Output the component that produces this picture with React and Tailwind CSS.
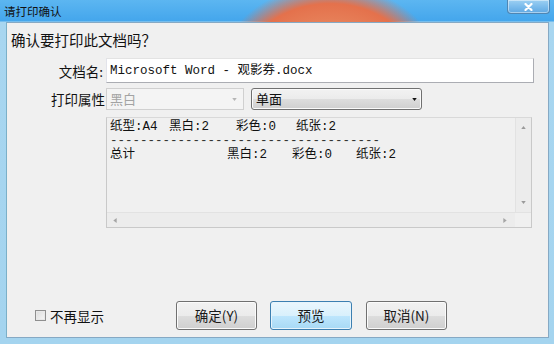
import React from "react"

const cjk = "font-['Noto_Sans_CJK_SC','Noto_Sans_CJK_JP',sans-serif]"
const mono = "font-['Liberation_Mono','Noto_Sans_CJK_SC',monospace]"

const Arrow = ({ dir, color = "#8a8a8a", size = 5 }) => {
  const pts = {
    up: "0,4 3,0 6,4",
    down: "0,0 6,0 3,4",
    left: "4,0 4,6 0,3",
    right: "0,0 0,6 4,3",
  }
  const horiz = dir == "left" || dir == "right"
  return (
    <svg
      width={horiz ? 4 : 6}
      height={horiz ? 6 : 4}
      viewBox={horiz ? "0 0 4 6" : "0 0 6 4"}
      style={{ width: horiz ? size - 1 : size, height: horiz ? size : size - 2 }}
    >
      <polygon points={pts[dir]} fill={color} />
    </svg>
  )
}

const Button = ({ label, primary }) => (
  <div
    className={
      "h-[29px] flex items-center justify-center rounded-[3px] border text-[13.5px] text-[#1a1a1a] " +
      (primary
        ? "w-[82px] border-[#3c7fb1] bg-[linear-gradient(180deg,#eaf6fd_0%,#d9f0fc_50%,#bee6fd_51%,#a7d9f5_100%)] shadow-[inset_0_0_0_1px_#e6f4fc]"
        : "w-[81px] border-[#707070] bg-[linear-gradient(180deg,#f2f2f2_0%,#ebebeb_50%,#dddddd_51%,#cfcfcf_100%)] shadow-[inset_0_0_0_1px_#fbfbfb]")
    }
  >
    {label}
  </div>
)

export default function App() {
  return (
    <div
      className={
        "w-[554px] h-[344px] relative flex flex-col overflow-hidden " +
        cjk +
        " bg-[radial-gradient(ellipse_110px_85px_at_330px_70px,#eba680_0%,#e88b62_40%,#e4714c_78%,rgba(228,113,76,0)_100%),linear-gradient(180deg,#5cb6f1_0px,#44a6ec_21px,#a8d6f0_22px,#a4d4ef_100%)]"
      }
    >
      {/* title bar */}
      <div className="h-[22px] flex items-center pl-[4px] shrink-0">
        <span className="text-[11.5px] leading-[14px] text-[#111] -mt-[1px]">
          请打印确认
        </span>
      </div>
      <div className="absolute top-0 right-[4px] w-[43px] h-[14px] rounded-b-[4px] border border-t-0 border-[#4f86b3] bg-[linear-gradient(180deg,#9dd0f2_0%,#7cbcec_50%,#5fa8e2_100%)] shadow-[inset_0_0_0_1px_rgba(255,255,255,0.45)] flex items-center justify-center">
        <svg width="9" height="8" viewBox="0 0 9 8">
          <path
            d="M1.5 1 L7.5 7 M7.5 1 L1.5 7"
            stroke="#ffffff"
            strokeWidth="2.2"
            strokeLinecap="round"
          />
        </svg>
      </div>

      {/* client */}
      <div className="ml-[6px] mr-[5px] mb-[6px] flex-1 flex flex-col border border-[#86a9c4] bg-[#f0f0f0] border-l-[#7bb0c8]">
        <div className="pt-[8px] pl-[4px] text-[14.5px] leading-[18px] text-[#111]">
          确认要打印此文档吗？
        </div>

        <div className="mt-[9px] flex items-center h-[25px]">
          <div className="w-[96px] text-right text-[13.5px] leading-[16px] text-[#111]">
            文档名:
          </div>
          <div className="ml-[3px] w-[428px] h-[25px] bg-white border border-[#abadb3] border-t-[#e3e3e3] border-l-[#e2e3ea] flex items-center pl-[3px]">
            <span className={mono + " text-[12.5px] leading-[14px] text-[#111] whitespace-pre"}>
              Microsoft Word - 观影券.docx
            </span>
          </div>
        </div>

        <div className="mt-[5px] flex items-center h-[22px]">
          <div className="w-[98px] text-right text-[13.5px] leading-[16px] text-[#111]">
            打印属性
          </div>
          <div className="ml-[1px] w-[138px] h-[22px] border border-[#d0d0d0] bg-[#f4f4f4] flex items-center justify-between pl-[3px] pr-[6px]">
            <span className="text-[13px] leading-[16px] text-[#a3a3a3]">黑白</span>
            <Arrow dir="down" color="#b5b5b5" />
          </div>
          <div className="ml-[7px] w-[171px] h-[22px] rounded-[3px] border border-[#707070] bg-[linear-gradient(180deg,#f2f2f2_0%,#ebebeb_50%,#dddddd_51%,#cfcfcf_100%)] shadow-[inset_0_0_0_1px_#fafafa] flex items-center justify-between pl-[4px] pr-[4px]">
            <span className="text-[13px] leading-[16px] text-[#111]">单面</span>
            <Arrow dir="down" color="#111" />
          </div>
        </div>

        {/* summary box */}
        <div className="mt-[7px] ml-[99px] w-[426px] h-[111px] border border-[#c9c9c9] border-t-[#d9d9d9] bg-[#f0f0f0] flex flex-col">
          <div className="flex flex-1">
            <div className={mono + " flex-1 pt-[2px] pl-[3px] text-[12.5px] leading-[14px] text-[#111] whitespace-pre"}>
              <div className="flex">
                <span className="w-[59px]">纸型:A4</span>
                <span className="w-[67px]">黑白:2</span>
                <span className="w-[60px]">彩色:0</span>
                <span>纸张:2</span>
              </div>
              <div className="text-[#333]">------------------------------------</div>
              <div className="flex">
                <span className="w-[117px]">总计</span>
                <span className="w-[65px]">黑白:2</span>
                <span className="w-[64px]">彩色:0</span>
                <span>纸张:2</span>
              </div>
            </div>
            <div className="w-[16px] border-l border-[#e2e2e2] bg-[#ececec] flex flex-col items-center justify-between py-[8px]">
              <Arrow dir="up" color="#9a9a9a" />
              <Arrow dir="down" color="#9a9a9a" />
            </div>
          </div>
          <div className="h-[15px] flex border-t border-[#e2e2e2]">
            <div className="flex-1 bg-[#ececec] flex items-center justify-between pl-[6px] pr-[8px]">
              <Arrow dir="left" color="#a5a5a5" />
              <Arrow dir="right" color="#a5a5a5" />
            </div>
            <div className="w-[16px] bg-[#f0f0f0]" />
          </div>
        </div>

        {/* bottom row */}
        <div className="mt-auto mb-[7px] flex items-center h-[29px]">
          <div className="ml-[28px] w-[141px] flex items-center">
            <div className="w-[11px] h-[11px] border border-[#8f8f8f] bg-[linear-gradient(135deg,#dcdcdc,#f6f6f6)] shadow-[inset_0_0_0_1px_#e8e8e8]" />
            <span className="ml-[4px] text-[13.5px] leading-[16px] text-[#111]">不再显示</span>
          </div>
          <Button label="确定(Y)" />
          <div className="ml-[13px]">
            <Button label="预览" primary />
          </div>
          <div className="ml-[14px]">
            <Button label="取消(N)" />
          </div>
        </div>
      </div>
    </div>
  )
}
